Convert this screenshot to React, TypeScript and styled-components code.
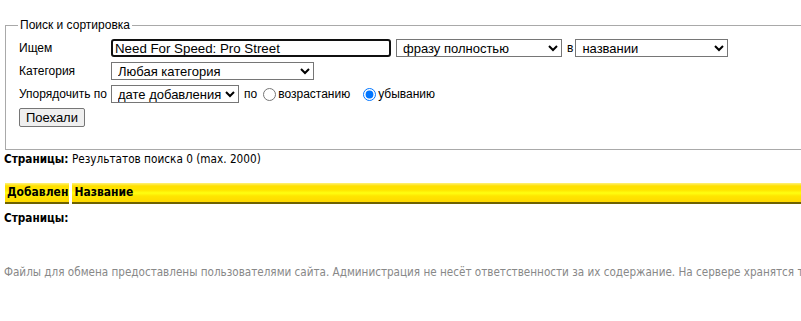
import React from 'react';
import styled, { createGlobalStyle } from 'styled-components';

const GlobalStyle = createGlobalStyle`
  html, body {
    margin: 0;
    padding: 0;
    background: #fff;
    overflow: hidden;
  }
  body {
    font-family: "Liberation Sans", Arial, sans-serif;
    color: #000;
  }
`;

const Page = styled.div`
  width: 1100px;
  padding: 18px 4px 0 4px;
`;

const SearchBox = styled.fieldset`
  margin: 0 0 0 1px;
  padding: 6px 12px 22px 13px;
  border: 1px solid #a9a9a9;
  border-right: none;
`;

const Legend = styled.legend`
  font-size: 12px;
  padding: 0 2px;
  margin-left: -1px;
`;

const FormGrid = styled.div`
  display: grid;
  grid-template-columns: 92px auto;
  row-gap: 5px;
  align-items: center;
  font-size: 13px;
  margin-top: 1px;
`;

const Label = styled.span`
  font-size: 12px;
  white-space: nowrap;
`;

const Controls = styled.div`
  display: flex;
  align-items: center;
  gap: 5px;
  white-space: nowrap;
  font-size: 12px;
`;

const TextInput = styled.input`
  box-sizing: border-box;
  width: 280px;
  height: 18px;
  padding: 0 2px;
  font: 13.3px "Liberation Sans", Arial, sans-serif;
  border: 2px solid #101010;
  border-radius: 3px;
  outline: none;
`;

const Select = styled.select<{ $w: number }>`
  box-sizing: border-box;
  width: ${p => p.$w}px;
  height: 18px;
  font: 13px "Liberation Sans", Arial, sans-serif;
  border: 1px solid #767676;
  border-radius: 0;
  background: #fff;
  color: #000;
  padding: 0 0 0 2px;
`;

const Radio = styled.input`
  margin: 0 2px 0 0;
  width: 13px;
  height: 13px;
`;

const RadioLabel = styled.label`
  display: inline-flex;
  align-items: center;
  margin-left: 1px;
  margin-right: 7px;
`;

const Submit = styled.button`
  font: 13px "Liberation Sans", Arial, sans-serif;
  height: 19px;
  width: 66px;
  padding: 0;
  background: #efefef;
  border: 1px solid #767676;
  border-radius: 2px;
  color: #000;
`;

const InfoLine = styled.div<{ $gap: number }>`
  font-family: "DejaVu Sans Condensed", "DejaVu Sans", sans-serif;
  font-size: 11.7px;
  margin-top: ${p => p.$gap}px;
  height: 15px;
`;

const Strong = styled.b`
  font-weight: bold;
`;

const ResultTable = styled.div`
  display: flex;
  gap: 3px;
  margin: 16px 0 0 1px;
`;

const HeadCell = styled.div<{ $grow?: boolean }>`
  flex: ${p => (p.$grow ? '1' : '0 0 auto')};
  height: 19px;
  line-height: 19px;
  padding: 0 1px 0 2px;
  font-family: "DejaVu Sans Condensed", "DejaVu Sans", sans-serif;
  font-weight: bold;
  font-size: 12px;
  background: linear-gradient(
    #fff27a 0px,
    #ffe000 3px,
    #ffe400 7px,
    #ffff10 10px,
    #ffe600 13px,
    #ffd800 19px
  );
  border-bottom: 2px solid #6e6200;
`;

const Footer = styled.div`
  margin-top: 39px;
  font-family: "DejaVu Sans Condensed", "DejaVu Sans", sans-serif;
  font-size: 11.6px;
  color: #888;
  white-space: nowrap;
`;

export default function App() {
  return (
    <Page>
      <GlobalStyle />
      <SearchBox>
        <Legend>Поиск и сортировка</Legend>
        <FormGrid>
          <Label>Ищем</Label>
          <Controls>
            <TextInput defaultValue="Need For Speed: Pro Street" />
            <Select $w={166} defaultValue="phrase">
              <option value="phrase">фразу полностью</option>
            </Select>
            <span>в</span>
            <Select $w={153} defaultValue="title" style={{ marginLeft: -3 }}>
              <option value="title">названии</option>
            </Select>
          </Controls>
          <Label>Категория</Label>
          <Controls>
            <Select $w={203} defaultValue="any">
              <option value="any">Любая категория</option>
            </Select>
          </Controls>
          <Label>Упорядочить по</Label>
          <Controls>
            <Select $w={128} defaultValue="date">
              <option value="date">дате добавления</option>
            </Select>
            <span>по</span>
            <RadioLabel>
              <Radio type="radio" name="order" />
              возрастанию
            </RadioLabel>
            <RadioLabel>
              <Radio type="radio" name="order" defaultChecked />
              убыванию
            </RadioLabel>
          </Controls>
          <Submit>Поехали</Submit>
        </FormGrid>
      </SearchBox>
      <InfoLine $gap={2}>
        <Strong>Страницы:</Strong> Результатов поиска 0 (max. 2000)
      </InfoLine>
      <ResultTable>
        <HeadCell>Добавлен</HeadCell>
        <HeadCell $grow>Название</HeadCell>
      </ResultTable>
      <InfoLine $gap={7}>
        <Strong>Страницы:</Strong>
      </InfoLine>
      <Footer>
        Файлы для обмена предоставлены пользователями сайта. Администрация не несёт ответственности за их содержание. На сервере хранятся только torrent-файлы.
      </Footer>
    </Page>
  );
}
